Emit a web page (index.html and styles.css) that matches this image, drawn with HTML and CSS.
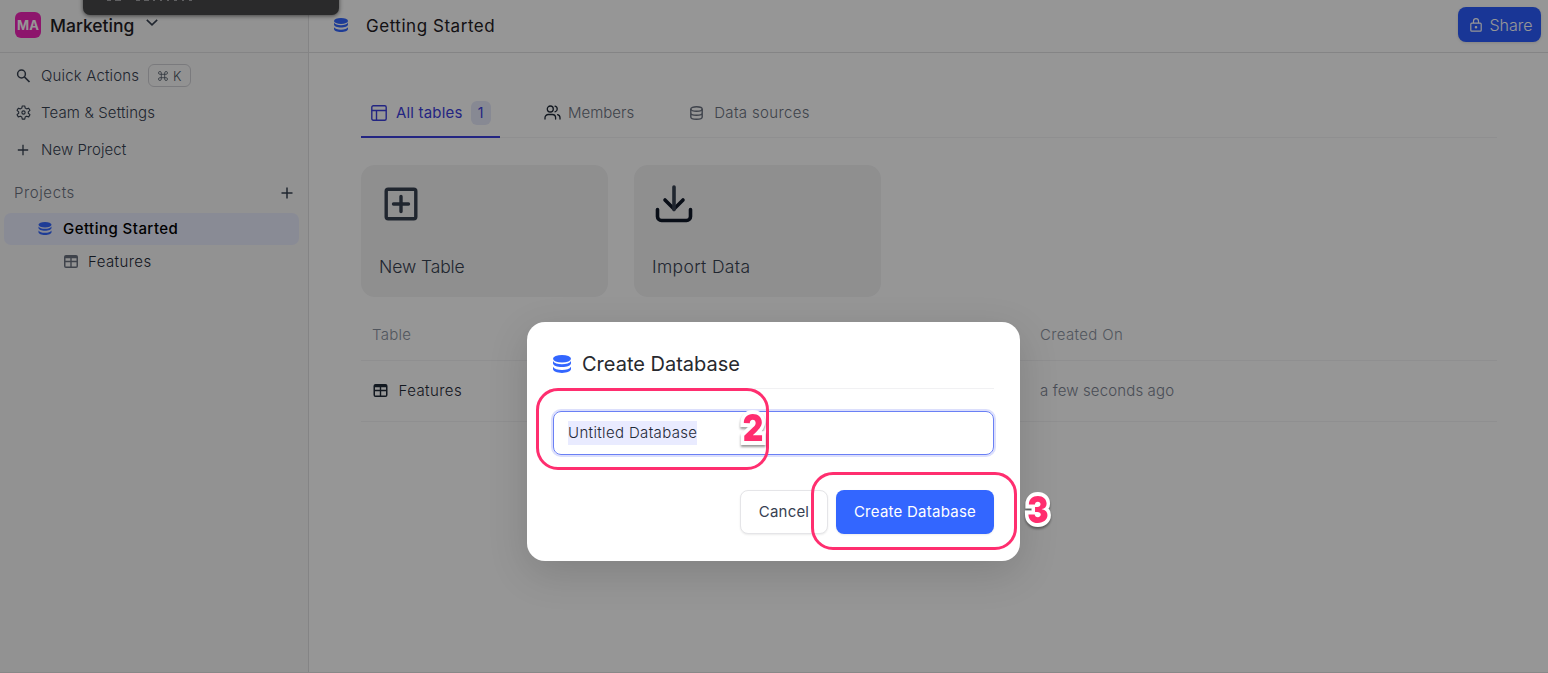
FILE: index.html
```html
<!DOCTYPE html>
<html lang="en">
<head>
<meta charset="utf-8">
<title>Getting Started</title>
<link rel="stylesheet" href="styles.css">
</head>
<body>
<svg class="defs" width="0" height="0">
  <symbol id="db" viewBox="0 0 18 18">
    <ellipse cx="9" cy="3.8" rx="9" ry="3.8"/>
    <path d="M0 6.1c1.2 2.1 4.8 3.2 9 3.2s7.800-1.100 9-3.200v2.100c0 2.200-4 3.900-9 3.900S0 10.400 0 8.200z"/>
    <path d="M0 11.800c1.200 2.100 4.800 3.200 9 3.200s7.800-1.100 9-3.200v2.300c0 2.200-4 3.900-9 3.900s-9-1.700-9-3.900z"/>
  </symbol>
  <symbol id="plus" viewBox="0 0 12 12"><path d="M6 .5v11M.5 6h11" fill="none" stroke="currentColor" stroke-width="1.5"/></symbol>
  <symbol id="grid" viewBox="0 0 14 13"><path d="M2 0h10a2 2 0 0 1 2 2v9a2 2 0 0 1-2 2H2a2 2 0 0 1-2-2V2a2 2 0 0 1 2-2zM1.500 3.200v2.600h4.800V3.200zM7.700 3.200v2.600h4.800V3.200zM1.500 7.200v4.300h4.800V7.200zM7.700 7.200v4.300h4.800V7.200z" fill-rule="evenodd"/></symbol>
</svg>
<div class="app">
  <aside class="sidebar">
    <div class="workspace">
      <span class="avatar">MA</span>
      <span class="ws-name">Marketing</span>
      <svg class="chevron" width="12" height="7" viewBox="0 0 12 7"><path d="M.8.8 6 5.800 11.200.8" fill="none" stroke="currentColor" stroke-width="1.600"/></svg>
    </div>
    <nav class="menu">
      <div class="item"><svg class="ico" width="14" height="14" viewBox="0 0 14 14" fill="none" stroke="currentColor"><circle cx="5" cy="5" r="3.900" stroke-width="1.500"/><path d="m8 8 5 5" stroke-width="1.700"/></svg><span class="t-quick">Quick Actions</span><kbd class="kbd"><svg width="10" height="10" viewBox="0 0 10 10" fill="none" stroke="currentColor" stroke-width=".8"><path d="M3.300 3.300V1.900a1.400 1.400 0 1 0-1.400 1.400h6.200a1.400 1.400 0 1 0-1.400-1.400v6.200a1.400 1.400 0 1 0 1.400-1.400H1.900a1.400 1.400 0 1 0 1.400 1.400z"/></svg><span>K</span></kbd></div>
      <div class="item"><svg class="ico" width="15" height="15" viewBox="0 0 24 24" fill="none" stroke="currentColor" stroke-width="1.800" stroke-linejoin="round"><path d="M10 1.500h4l.7 3.400 2.300 1.300 3.300-1.100 2 3.500L19.700 11v2.200l2.600 2.300-2 3.500-3.300-1.100-2.300 1.300-.7 3.300h-4l-.7-3.300L7 17.900 3.700 19l-2-3.500 2.600-2.300V11L1.700 8.600l2-3.500L7 6.200l2.300-1.300z"/><circle cx="12" cy="12" r="2.600"/></svg><span class="t-team">Team &amp; Settings</span></div>
      <div class="item"><svg class="ico" width="15" height="12" viewBox="0 0 15 12"><path d="M7 .8v10.400M1.800 6h10.400" stroke="currentColor" stroke-width="1.300"/></svg><span class="t-new">New Project</span></div>
    </nav>
    <div class="projects"><span>Projects</span><svg width="12" height="12"><use href="#plus"/></svg></div>
    <div class="project"><svg class="blue" width="14" height="13"><use href="#db"/></svg><span>Getting Started</span></div>
    <div class="leaf"><svg width="14" height="13"><use href="#grid"/></svg><span class="t-feat">Features</span></div>
  </aside>
  <main class="main">
    <header class="topbar">
      <svg class="blue" width="14" height="14"><use href="#db"/></svg>
      <h1>Getting Started</h1>
      <button class="share"><svg width="12" height="14" viewBox="0 0 12 14" fill="none" stroke="currentColor" stroke-width="1.200"><rect x=".8" y="5.200" width="10.400" height="8" rx="1"/><path d="M3.500 5V3.200a2.500 2.500 0 0 1 5 0V5"/><circle cx="6" cy="9.200" r=".7" fill="currentColor"/></svg><span>Share</span></button>
    </header>
    <section class="content">
      <div class="tabs">
        <div class="tab active"><svg width="16" height="16" viewBox="0 0 16 16" fill="none" stroke="currentColor" stroke-width="1.400"><rect x=".8" y=".8" width="14.400" height="14.400" rx="1.500"/><path d="M.8 5.500h14.400M5.500 5.500v9.700"/></svg><span class="t-all">All tables</span><span class="count">1</span></div>
        <div class="tab members"><svg width="17" height="15" viewBox="0 0 17 15" fill="none" stroke="currentColor" stroke-width="1.300" stroke-linecap="round"><circle cx="6.300" cy="4" r="3"/><path d="M1 14v-1.200A3.300 3.300 0 0 1 4.300 9.500h4a3.300 3.300 0 0 1 3.300 3.300V14M11 1.100a3 3 0 0 1 0 5.800M16 14v-1.200a3.300 3.300 0 0 0-2.400-3.200"/></svg><span>Members</span></div>
        <div class="tab sources"><svg width="13" height="14" viewBox="0 0 13 14" fill="none" stroke="currentColor" stroke-width="1.400"><ellipse cx="6.500" cy="3" rx="5.700" ry="2.300"/><path d="M.8 3v8c0 1.300 2.500 2.300 5.700 2.300s5.700-1 5.700-2.300V3M.8 7c0 1.300 2.500 2.300 5.700 2.300s5.700-1 5.700-2.300"/></svg><span>Data sources</span></div>
      </div>
      <div class="cards">
        <div class="card"><svg width="44" height="44" viewBox="0 0 44 44" fill="none" stroke="currentColor" stroke-width="3.400"><rect x="7.200" y="7.200" width="29.600" height="29.600" rx="2"/><path d="M22 14.500v15M14.500 22h15" stroke-linecap="round"/></svg><span class="t-nt">New Table</span></div>
        <div class="card"><svg width="44" height="44" viewBox="0 0 44 44" fill="none" stroke="currentColor" stroke-width="3.600" stroke-linecap="round"><path d="M5.500 27.500v7a4 4 0 0 0 4 4h25a4 4 0 0 0 4-4v-7M13 18l9 9 9-9" class="tray"/><path d="M22 5V27.500"/></svg><span class="t-id">Import Data</span></div>
      </div>
      <div class="table">
        <div class="tr th"><span class="c1 t-table">Table</span><span class="created">Created On</span></div>
        <div class="tr td"><span class="c1"><svg width="15" height="13"><use href="#grid"/></svg><span class="t-feat">Features</span></span><span class="ago">a few seconds ago</span></div>
      </div>
    </section>
  </main>
</div>
<div class="overlay">
  <div class="dialog">
    <div class="title"><svg class="blue" width="18" height="18"><use href="#db"/></svg><span>Create Database</span></div>
    <div class="field"><span>Untitled Database</span></div>
    <div class="actions"><button class="btn cancel">Cancel</button><button class="btn create">Create Database</button></div>
  </div>
</div>
<div class="tooltip"><svg width="86" height="2" viewBox="0 0 86 2"><path d="M0 .5h4M8 .5h6M29 .5h4M37 .5h5M46 .5h2M53 .5h2M60 .5h2M67 .5h3M75 .5h2M82 .5h3" stroke="#858587" stroke-width="1" opacity=".6"/></svg></div>
<div class="mark mark-name"></div>
<div class="mark mark-create"></div>
<div class="step step-two">2</div>
<div class="step step-three">3</div>
</body>
</html>
```
FILE: styles.css
```css
* { box-sizing: border-box; }
body { margin: 0; width: 1548px; height: 673px; overflow: hidden; position: relative; font-family: Inter, "Open Sans", sans-serif; font-size: 15px; font-weight: 300; color: #374151; background: #fff; }
button { font: inherit; border: 0; }
svg { flex: none; fill: currentColor; }
svg[fill="none"] { fill: none; }
.defs { position: absolute; }
.blue { color: #36f; }
.app { display: flex; height: 673px; border-bottom: 1px solid #e8e8e8; }

.sidebar { width: 309px; background: #f9f9f9; border-right: 1px solid #e1e1e3; }
.workspace { height: 53px; padding: 0 15px 3px; display: flex; align-items: center; border-bottom: 1px solid #e1e1e3; }
.avatar { width: 26px; height: 26px; border-radius: 6px; background: #f024b8; color: #fff; font-size: 13px; font-weight: 700; display: grid; place-items: center; }
.ws-name { margin: 2px 12px 0 9px; width: 84px; font-size: 17.500px; font-weight: 500; color: #1f2024; white-space: nowrap; }
.chevron { margin-top: -4px; }
.menu { padding-top: 4px; }
.item { height: 37px; padding-left: 16px; display: flex; align-items: center; color: #374151; white-space: nowrap; }
.ico { width: 15px; margin-right: 10px; }
.t-quick { letter-spacing: .16px; }
.t-team { letter-spacing: .13px; }
.t-new { letter-spacing: .04px; }
.kbd { margin-left: 9px; width: 43px; height: 23px; border: 1px solid #d0d0d5; border-radius: 6px; display: flex; align-items: center; justify-content: center; gap: 5px; font: 300 13px Inter, sans-serif; color: #4b5563; }
.projects { height: 45px; padding: 4px 15px 0 14px; display: flex; align-items: center; justify-content: space-between; color: #6b7280; letter-spacing: .6px; }
.projects svg { color: #374151; }
.project { margin: 0 9px 0 4px; height: 32px; padding: 0 0 2px 34px; display: flex; align-items: center; gap: 11px; border-radius: 7px; background: #e9ecfd; color: #000; font-weight: 500; letter-spacing: .46px; }
.leaf { height: 34px; padding: 0 0 2px 64px; display: flex; align-items: center; gap: 10px; color: #1f2937; }
.leaf svg { color: #6b7280; }
.t-feat { letter-spacing: .42px; }

.main { flex: 1; }
.topbar { height: 53px; padding: 0 7px 3px 25px; display: flex; align-items: center; border-bottom: 1px solid #e1e1e3; }
h1 { margin: 2px 0 0 18px; font-size: 17px; font-weight: 400; color: #1f2024; flex: 1; letter-spacing: .54px; }
.share { width: 83px; height: 35px; padding: 0 0 0 4px; border-radius: 8px; background: #2c5cff; color: #fff; display: flex; align-items: center; justify-content: center; gap: 7px; font-size: 16px; box-shadow: 0 1px 3px rgba(0, 0, 0, .12); }

.content { padding: 34px 51px 0 52px; }
.tabs { display: flex; height: 51px; border-bottom: 1px solid #f3f3f5; color: #6b7280; }
.tab { height: 51px; display: flex; align-items: center; white-space: nowrap; }
.active { width: 139px; padding: 2px 0 0 10px; color: #3d40dd; font-weight: 400; border-bottom: 2px solid #3d40dd; }
.t-all { margin: 0 8px 0 9px; letter-spacing: .18px; }
.count { width: 20px; height: 24px; border-radius: 6px; background: #e6e9fa; display: grid; place-items: center; font-size: 14px; }
.members { margin-left: 44px; gap: 7px; }
.members svg { color: #1f2937; }
.sources { margin-left: 56px; gap: 11px; }
.sources span { letter-spacing: .35px; }
.cards { margin-top: 27px; display: flex; gap: 26px; }
.card { width: 247px; height: 132px; padding: 17px 18px 20px; border-radius: 14px; background: #f3f3f4; display: flex; flex-direction: column; justify-content: space-between; font-size: 17.500px; color: #374151; }
.card .tray { color: #101828; stroke: #101828; }
.t-nt { letter-spacing: -.1px; }
.t-id { letter-spacing: .35px; }
.table { margin-top: 13px; }
.tr { display: grid; grid-template-columns: 668px 1fr; align-items: center; border-bottom: 1px solid #f3f3f5; padding-left: 11px; }
.th { height: 51px; padding-bottom: 2px; color: #8b93a1; }
.t-table { letter-spacing: .25px; }
.created { letter-spacing: .36px; }
.td { height: 61px; padding-bottom: 2px; color: #7c8492; }
.ago { letter-spacing: .14px; }
.c1 { display: flex; align-items: center; gap: 11px; }
.td .c1 { padding-left: 1px; gap: 10.500px; color: #1f2937; }

.overlay { position: absolute; inset: 0; background: rgba(0, 0, 0, .41); display: grid; justify-content: start; align-content: start; padding: 322px 0 0 527px; }
.dialog { width: 493px; height: 239px; padding: 26px; border-radius: 18px; background: #fff; box-shadow: 0 12px 40px rgba(0, 0, 0, .14); }
.title { height: 41px; padding-bottom: 9px; display: flex; align-items: center; gap: 11px; border-bottom: 1px solid #f1f1f3; font-size: 20px; font-weight: 400; color: #27292e; }
.field { margin: 22px 0 0; height: 44px; padding-left: 14px; display: flex; align-items: center; border: 1px solid #6a80f5; border-radius: 8px; box-shadow: 0 0 0 2px #dcdffc; color: #1f2937; letter-spacing: .35px; }
.field span { height: 24px; line-height: 24px; background: #e9ebff; }
.actions { margin-top: 35px; display: flex; justify-content: flex-end; gap: 8px; }
.btn { height: 44px; border-radius: 8px; padding: 0 0 2px; white-space: nowrap; box-shadow: 0 1px 2px rgba(0, 0, 0, .08); font-weight: 400; }
.cancel { width: 88px; border: 1px solid #e5e5e8; background: #fff; color: #374151; letter-spacing: .2px; }
.create { width: 158px; background: #36f; color: #fff; letter-spacing: .25px; }

.tooltip { position: absolute; left: 83px; top: -20px; width: 256px; height: 35px; padding: 20px 0 0 24px; border-radius: 7px; background: #2a2a2b; box-shadow: 0 1px 4px rgba(0, 0, 0, .55); }
.tooltip svg { display: block; }
.mark { position: absolute; border: 3px solid #ff2e6f; border-radius: 22px; }
.mark-name { left: 535.500px; top: 387.500px; width: 233px; height: 82px; }
.mark-create { left: 811px; top: 471.500px; width: 206px; height: 78px; }
.step { position: absolute; width: 30px; text-align: center; font: 900 37px/40px Inter, sans-serif; color: #ff2e6f; -webkit-text-stroke: 8px #fff; stroke-linejoin: round; paint-order: stroke fill; filter: drop-shadow(0 2px 1px rgba(0, 0, 0, .4)); transform: scaleX(.86); }
.step-two { left: 738px; top: 408px; }
.step-three { left: 1023px; top: 490px; }
```
